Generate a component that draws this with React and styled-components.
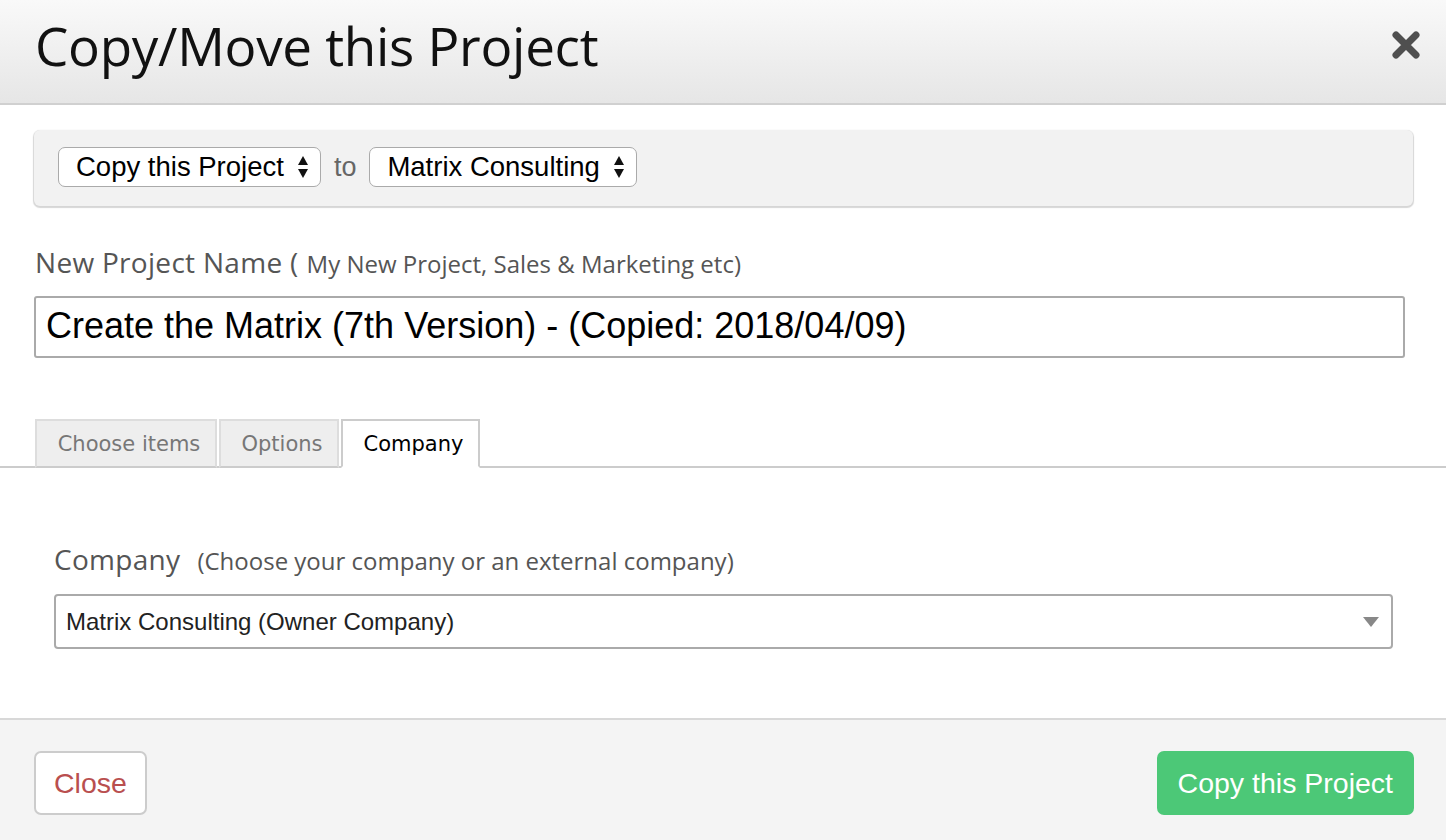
import React from "react";
import styled, { createGlobalStyle } from "styled-components";

const GlobalStyle = createGlobalStyle`
  html, body {
    margin: 0;
    padding: 0;
    background: #fff;
  }
  * {
    box-sizing: border-box;
  }
`;

const Modal = styled.div`
  width: 1446px;
  height: 840px;
  display: flex;
  flex-direction: column;
  background: #fff;
  font-family: "Open Sans", Lato, sans-serif;
  overflow: hidden;
`;

const Header = styled.div`
  height: 105px;
  display: flex;
  align-items: center;
  justify-content: space-between;
  padding: 0 23px 13px 35px;
  background: linear-gradient(#f9f9f9, #e6e6e6);
  border-bottom: 2px solid #d0d0d0;
`;

const Title = styled.h1`
  margin: 0;
  font-size: 53px;
  font-weight: 400;
  color: #111;
  letter-spacing: -0.3px;
`;

const CloseX = styled.button`
  border: none;
  background: none;
  padding: 0;
  width: 34px;
  height: 34px;
  display: flex;
  align-items: center;
  justify-content: center;
  cursor: pointer;
`;

const Body = styled.div`
  padding: 25px 33px 0 34px;
`;

const Toolbar = styled.div`
  height: 76px;
  display: flex;
  align-items: center;
  gap: 13px;
  padding: 0 24px 2px;
  background: #f2f2f2;
  border-radius: 6px;
  box-shadow: 0 1px 1px 1px #d6d6d6;
`;

const SelectBox = styled.div`
  height: 40px;
  display: flex;
  align-items: center;
  gap: 13px;
  padding: 0 11px 0 17px;
  background: #fff;
  border: 1.5px solid #aaa;
  border-radius: 7px;
  font-family: "Liberation Sans", Arial, sans-serif;
  font-size: 27.5px;
  color: #000;
`;

const ToText = styled.span`
  font-family: "Liberation Sans", Arial, sans-serif;
  font-size: 27px;
  color: #666;
`;

const FieldLabel = styled.div`
  margin: ${(p) => p.m || "37px 0 15px 1px"};
  font-size: 28px;
  letter-spacing: 0.3px;
  color: #555;
  display: flex;
  align-items: baseline;
  gap: ${(p) => p.gap || "8px"};
`;

const Hint = styled.span`
  font-size: 24px;
  letter-spacing: 0;
  color: #555;
`;

const TextInput = styled.div`
  height: 62px;
  margin-right: 8px;
  display: flex;
  align-items: center;
  padding: 0 10px 2px;
  border: 2px solid #aaa;
  border-radius: 3px;
  font-family: "Liberation Sans", Arial, sans-serif;
  font-size: 36px;
  color: #000;
`;

const TabBar = styled.div`
  margin-top: 61px;
  display: flex;
  gap: 2px;
  padding-left: 35px;
  border-bottom: 2px solid #ccc;
`;

const Tab = styled.div`
  height: 49px;
  padding: 0 12px 0 18px;
  display: flex;
  align-items: center;
  justify-content: center;
  white-space: nowrap;
  width: ${(p) => p.w};
  margin-bottom: -2px;
  background: ${(p) => (p.active ? "#fff" : "#eee")};
  border: 2px solid ${(p) => (p.active ? "#ccc" : "#ddd")};
  border-bottom: ${(p) => (p.active ? "2px solid #fff" : "2px solid #ccc")};
  font-family: "DejaVu Sans", Verdana, sans-serif;
  font-size: 21px;
  color: ${(p) => (p.active ? "#000" : "#777")};
`;

const TabPanel = styled.div`
  padding: 72px 53px 0 54px;
  flex: 1;
`;

const Dropdown = styled.div`
  height: 55px;
  display: flex;
  align-items: center;
  justify-content: space-between;
  padding: 0 12px 0 10px;
  border: 2px solid #aaa;
  border-radius: 4px;
  font-family: "Liberation Sans", Arial, sans-serif;
  font-size: 24px;
  color: #222;
`;

const Footer = styled.div`
  height: 122px;
  display: flex;
  justify-content: space-between;
  align-items: flex-start;
  padding: 31px 32px 0 34px;
  background: #f4f4f4;
  border-top: 2px solid #d8d8d8;
`;

const Button = styled.button`
  height: 64px;
  padding: 0 ${(p) => (p.primary ? "19px" : "18px")};
  border-radius: 7px;
  font-family: "Liberation Sans", Arial, sans-serif;
  font-size: 28.5px;
  cursor: pointer;
  border: 2px solid ${(p) => (p.primary ? "#4cc877" : "#ccc")};
  background: ${(p) => (p.primary ? "#4cc877" : "#fff")};
  color: ${(p) => (p.primary ? "#fff" : "#b94f4f")};
`;

const Updown = () => (
  <svg width="12" height="26" viewBox="0 0 12 26">
    <path d="M6 2 L11 11 L1 11 Z" fill="#111" />
    <path d="M6 24 L11 15 L1 15 Z" fill="#111" />
  </svg>
);

const App = () => {
  return (
    <>
      <GlobalStyle />
      <Modal>
        <Header>
          <Title>Copy/Move this Project</Title>
          <CloseX aria-label="close">
            <svg width="30" height="30" viewBox="0 0 30 30">
              <path
                d="M5 5 L25 25 M25 5 L5 25"
                stroke="#4f4f4f"
                strokeWidth="7"
                strokeLinecap="round"
              />
            </svg>
          </CloseX>
        </Header>
        <Body>
          <Toolbar>
            <SelectBox>
              Copy this Project <Updown />
            </SelectBox>
            <ToText>to</ToText>
            <SelectBox>
              Matrix Consulting <Updown />
            </SelectBox>
          </Toolbar>
          <FieldLabel gap="8px">
            New Project Name (
            <Hint>My New Project, Sales &amp; Marketing etc)</Hint>
          </FieldLabel>
          <TextInput>
            Create the Matrix (7th Version) - (Copied: 2018/04/09)
          </TextInput>
        </Body>
        <TabBar>
          <Tab w="182px">Choose items</Tab>
          <Tab w="120px">Options</Tab>
          <Tab w="139px" active>
            Company
          </Tab>
        </TabBar>
        <TabPanel>
          <FieldLabel gap="17px" m="0 0 16px 0">
            Company
            <Hint>(Choose your company or an external company)</Hint>
          </FieldLabel>
          <Dropdown>
            Matrix Consulting (Owner Company)
            <svg width="16" height="10" viewBox="0 0 16 10">
              <path d="M0 0 L16 0 L8 10 Z" fill="#888" />
            </svg>
          </Dropdown>
        </TabPanel>
        <Footer>
          <Button>Close</Button>
          <Button primary>Copy this Project</Button>
        </Footer>
      </Modal>
    </>
  );
};

export default App;
